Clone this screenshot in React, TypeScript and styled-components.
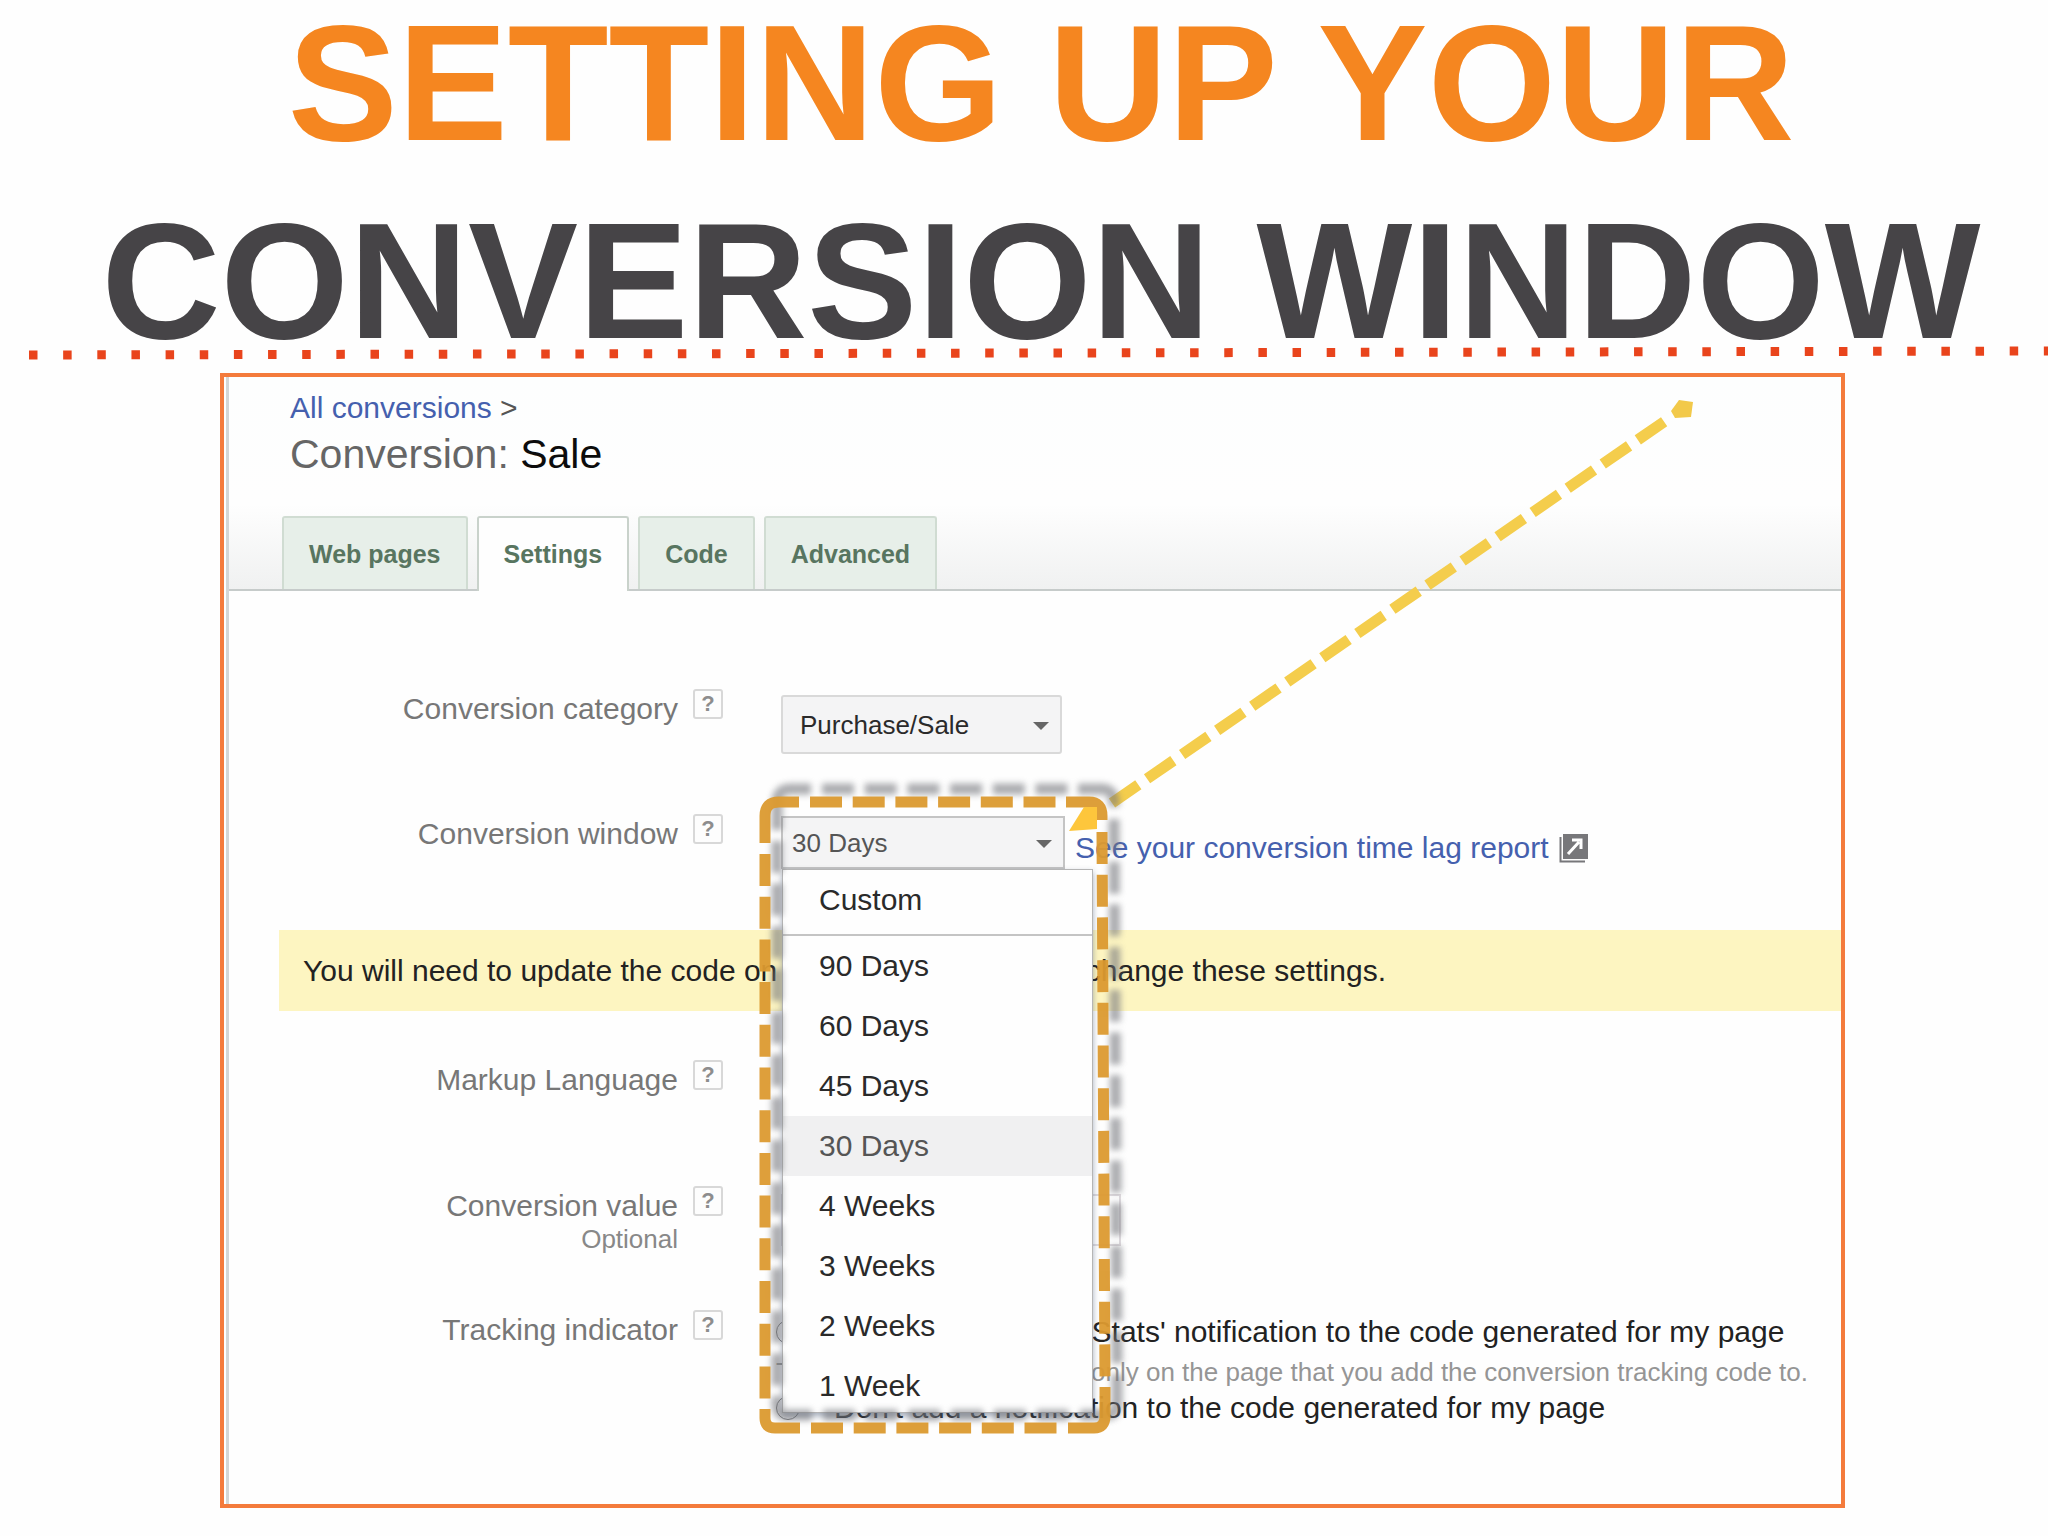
import React from "react";
import styled, { createGlobalStyle } from "styled-components";

const GlobalStyle = createGlobalStyle`
  *, *::before, *::after { box-sizing: border-box; }
  body {
    margin: 0;
    background: #fefefe;
    font-family: "Liberation Sans", Arial, Helvetica, sans-serif;
    overflow-x: hidden;
  }
`;

const Slide = styled.main`
  display: flex;
  flex-direction: column;
`;

const Title = styled.h1`
  display: flex;
  flex-direction: column;
  align-items: center;
  margin: -16px 0 0;
  padding-left: 34px;
  font-size: 165px;
  line-height: 198px;
  font-weight: 700;
  white-space: nowrap;
`;

const TitleLine = styled.span<{ $color: string }>`
  color: ${(p) => p.$color};
`;

const DottedRule = styled.svg`
  display: block;
  width: 100%;
  height: 14px;
  margin-top: -34px;
`;

const Frame = styled.section`
  position: relative;
  margin: 13px 203px 28px 220px;
  border: 4px solid #f47b3c;
  padding-left: 2px;
  color: #222;
`;

const Screen = styled.div`
  border-left: 3px solid #d3d7d7;
  padding-bottom: 78px;
`;

const Header = styled.header`
  padding: 13px 0 0 53px;
  border-bottom: 2px solid #c6cbca;
  background: linear-gradient(#fdfefe 0%, #fefefe 60%, #f0f1f1 100%);
`;

const Breadcrumb = styled.nav`
  padding-left: 8px;
  font-size: 30px;
  line-height: 36px;
  color: #555;
`;

const TextLink = styled.a`
  color: #4560ae;
  text-decoration: none;
`;

const PageName = styled.h2`
  margin: 4px 0 38px;
  padding-left: 8px;
  font-size: 41px;
  line-height: 48px;
  font-weight: 400;
  color: #666;
`;

const PageSubject = styled.span`
  color: #0c0c0c;
`;

const Tabs = styled.div`
  display: flex;
  gap: 9px;
`;

const Tab = styled.button<{ $active?: boolean }>`
  height: ${(p) => (p.$active ? 75 : 73)}px;
  margin: 0 0 ${(p) => (p.$active ? -2 : 0)}px;
  padding: 0 25px ${(p) => (p.$active ? 2 : 0)}px;
  border: 2px solid ${(p) => (p.$active ? "#c9d2cb" : "#d0dcd2")};
  border-bottom: 0;
  border-radius: 3px 3px 0 0;
  background: ${(p) => (p.$active ? "#fefefe" : "#e7efe9")};
  color: #587560;
  font: 700 25px/28px "Liberation Sans", Arial, sans-serif;
`;

const Form = styled.form`
  padding-top: 100px;
`;

const Row = styled.div<{ $height: number }>`
  display: flex;
  align-items: flex-start;
  min-height: ${(p) => p.$height}px;
`;

const LabelCell = styled.div`
  display: flex;
  flex: none;
  justify-content: flex-end;
  width: 494px;
  gap: 15px;
`;

const LabelText = styled.div`
  text-align: right;
`;

const FieldLabel = styled.label`
  display: block;
  font-size: 30px;
  line-height: 36px;
  color: #777;
`;

const Optional = styled.div`
  font-size: 26px;
  line-height: 30px;
  color: #888;
`;

const Help = styled.button`
  width: 30px;
  height: 30px;
  margin: -2px 0 0;
  padding: 0;
  border: 2px solid #d8d8d8;
  border-radius: 3px;
  background: #fdfdfd;
  color: #8d8d8d;
  font: 700 22px/26px "Liberation Sans", Arial, sans-serif;
`;

const Field = styled.div<{ $top?: number }>`
  display: flex;
  align-items: flex-end;
  gap: 10px;
  margin-left: 58px;
  padding-top: ${(p) => p.$top ?? 0}px;
`;

const SelectWrap = styled.div`
  position: relative;
  &::after {
    content: "";
    position: absolute;
    top: 50%;
    right: 13px;
    margin-top: -3px;
    border: 8px solid transparent;
    border-top-color: #666;
    border-bottom: 0;
    pointer-events: none;
  }
`;

const Select = styled.select<{ $open?: boolean }>`
  appearance: none;
  display: block;
  width: ${(p) => (p.$open ? 284 : 281)}px;
  height: ${(p) => (p.$open ? 53 : 59)}px;
  margin: 0;
  padding: 0 40px 0 ${(p) => (p.$open ? 9 : 17)}px;
  border: 2px solid ${(p) => (p.$open ? "#c4c4c4" : "#d9d9d9")};
  border-radius: ${(p) => (p.$open ? 0 : 3)}px;
  background: #f4f4f5;
  color: ${(p) => (p.$open ? "#555" : "#2a2a2a")};
  font: 400 26px/30px "Liberation Sans", Arial, sans-serif;
`;

const Menu = styled.ul`
  position: absolute;
  z-index: 2;
  top: 53px;
  left: 1px;
  width: 311px;
  height: 544px;
  margin: 0;
  padding: 0;
  overflow: hidden;
  list-style: none;
  border: 1px solid #b5b5b5;
  background: #fefefe;
  box-shadow: 0 3px 6px rgba(60, 80, 110, 0.45);
`;

const MenuItem = styled.li`
  &:first-child {
    padding-bottom: 4px;
    border-bottom: 2px solid #c4c4c4;
  }
`;

const Option = styled.button<{ $selected?: boolean }>`
  display: block;
  width: 100%;
  height: 60px;
  padding: 0 0 0 36px;
  border: 0;
  text-align: left;
  background: ${(p) => (p.$selected ? "#f0f0f1" : "transparent")};
  color: ${(p) => (p.$selected ? "#555" : "#2a2a2a")};
  font: 400 30px/60px "Liberation Sans", Arial, sans-serif;
`;

const ReportLink = styled(TextLink)`
  display: flex;
  align-items: center;
  gap: 10px;
  font-size: 30px;
  line-height: 42px;
  white-space: nowrap;
`;

const Notice = styled.p`
  margin: 0 0 51px 50px;
  padding: 23px 24px 22px;
  background: #fdf5c1;
  font-size: 30px;
  line-height: 36px;
  white-space: nowrap;
`;

const ValueInput = styled.input`
  width: 340px;
  height: 52px;
  border: 2px solid #dedade;
  background: #fefefe;
`;

const RadioGroup = styled.div`
  margin-left: -5px;
  white-space: nowrap;
`;

const RadioLabel = styled.label`
  display: flex;
  align-items: center;
  gap: 34px;
  font-size: 30px;
  line-height: 36px;
`;

const Radio = styled.input`
  width: 24px;
  height: 24px;
  margin: 0;
`;

const Hint = styled.div`
  padding-top: 4px;
  font-size: 26px;
  line-height: 36px;
  color: #959595;
`;

const Annotation = styled.svg`
  position: absolute;
  z-index: 3;
  top: 0;
  left: 0;
  width: 100%;
  height: 100%;
  pointer-events: none;
`;

const Outline = styled.g`
  fill: none;
  stroke-width: 11;
`;

const Highlight = styled(Outline)`
  stroke: #dc9a30;
  opacity: 0.95;
`;

const Shade = styled(Outline)`
  stroke: #74767c;
  opacity: 0.6;
`;

function DashedOutline() {
  return (
    <>
      <path d="M799 802H779Q765 802 765 816V843" />
      <path d="M810 802H1060" strokeDasharray="32 10.7" />
      <path d="M1066 802H1089Q1102 802 1102 816V820" />
      <path d="M1102 832L1105 1382" strokeDasharray="32 10.7" />
      <path d="M1105 1387V1416Q1105 1428 1094 1428H1068" />
      <path d="M811 1428H1060" strokeDasharray="32 10.7" />
      <path d="M800 1428H775Q765 1428 765 1418V1409" />
      <path d="M765 854V1404" strokeDasharray="32 10.7" />
    </>
  );
}

function HelpButton({ topic }: { topic: string }) {
  return (
    <Help type="button" aria-label={`Help: ${topic}`}>
      ?
    </Help>
  );
}

function RowLabel({ text, htmlFor, optional }: { text: string; htmlFor?: string; optional?: boolean }) {
  return (
    <LabelCell>
      <LabelText>
        <FieldLabel htmlFor={htmlFor}>{text}</FieldLabel>
        {optional && <Optional>Optional</Optional>}
      </LabelText>
      <HelpButton topic={text} />
    </LabelCell>
  );
}

const tabs = ["Web pages", "Settings", "Code", "Advanced"];
const windows = ["Custom", "90 Days", "60 Days", "45 Days", "30 Days", "4 Weeks", "3 Weeks", "2 Weeks", "1 Week"];

export default function App() {
  return (
    <Slide>
      <GlobalStyle />
      <Title>
        <TitleLine $color="#f58620">SETTING UP YOUR</TitleLine>
        <TitleLine $color="#464447">CONVERSION WINDOW</TitleLine>
      </Title>
      <DottedRule viewBox="0 0 2048 14" preserveAspectRatio="none" aria-hidden="true">
        <line x1="29" y1="9" x2="2048" y2="5" stroke="#e9441c" strokeWidth="9" strokeDasharray="8.5 25.65" />
      </DottedRule>

      <Frame>
        <Screen>
          <Header>
            <Breadcrumb>
              <TextLink href="#conversions">All conversions</TextLink> &gt;
            </Breadcrumb>
            <PageName>
              Conversion: <PageSubject>Sale</PageSubject>
            </PageName>
            <Tabs role="tablist">
              {tabs.map((t) => (
                <Tab key={t} role="tab" type="button" aria-selected={t === "Settings"} $active={t === "Settings"}>
                  {t}
                </Tab>
              ))}
            </Tabs>
          </Header>

          <Form>
            <Row $height={125}>
              <RowLabel text="Conversion category" htmlFor="category" />
              <Field $top={4}>
                <SelectWrap>
                  <Select id="category" defaultValue="Purchase/Sale">
                    <option>Purchase/Sale</option>
                  </Select>
                </SelectWrap>
              </Field>
            </Row>

            <Row $height={114}>
              <RowLabel text="Conversion window" htmlFor="window" />
              <Field>
                <SelectWrap>
                  <Select id="window" $open defaultValue="30 Days">
                    {windows.map((w) => (
                      <option key={w}>{w}</option>
                    ))}
                  </Select>
                  <Menu>
                    {windows.map((w) => (
                      <MenuItem key={w}>
                        <Option type="button" $selected={w === "30 Days"}>
                          {w}
                        </Option>
                      </MenuItem>
                    ))}
                  </Menu>
                </SelectWrap>
                <ReportLink href="#time-lag">
                  See your conversion time lag report
                  <svg width="29" height="29" viewBox="0 0 29 29" aria-hidden="true">
                    <path d="M1.5 3V27.5H26" fill="none" stroke="#77777a" strokeWidth="2" />
                    <rect x="4" y="0" width="25" height="25" fill="#77777a" />
                    <path d="M9 20L20 8M13 6H22V15" fill="none" stroke="#fff" strokeWidth="3" />
                  </svg>
                </ReportLink>
              </Field>
            </Row>

            <Notice>You will need to update the code on your web pages if you change these settings.</Notice>

            <Row $height={126}>
              <RowLabel text="Markup Language" />
            </Row>

            <Row $height={124}>
              <RowLabel text="Conversion value" htmlFor="value" optional />
              <Field $top={6}>
                <ValueInput id="value" type="text" />
              </Field>
            </Row>

            <Row $height={114}>
              <RowLabel text="Tracking indicator" />
              <Field $top={2}>
                <RadioGroup role="radiogroup" aria-label="Tracking indicator">
                  <RadioLabel>
                    <Radio type="radio" name="indicator" />
                    Add a 'Google Site Stats' notification to the code generated for my page
                  </RadioLabel>
                  <Hint>The notification will appear only on the page that you add the conversion tracking code to.</Hint>
                  <RadioLabel>
                    <Radio type="radio" name="indicator" />
                    Don't add a notification to the code generated for my page
                  </RadioLabel>
                </RadioGroup>
              </Field>
            </Row>
          </Form>
        </Screen>

        <Annotation aria-hidden="true">
          <defs>
            <filter id="soft" x="-10%" y="-10%" width="120%" height="120%">
              <feGaussianBlur stdDeviation="3" />
            </filter>
          </defs>
          <g transform="translate(-224 -377)">
            <path d="M1112 803L1668 419" fill="none" stroke="#f4cd4c" strokeWidth="11" strokeDasharray="32 10.6" />
            <path d="M1671 411L1679 400L1693 402L1691 417L1675 418Z" fill="#f2c94a" />
            <Shade transform="translate(12 -13)" filter="url(#soft)">
              <DashedOutline />
            </Shade>
            <Highlight>
              <DashedOutline />
            </Highlight>
            <path d="M1069 831L1084 807H1097V829Z" fill="#fdc63c" />
          </g>
        </Annotation>
      </Frame>
    </Slide>
  );
}
